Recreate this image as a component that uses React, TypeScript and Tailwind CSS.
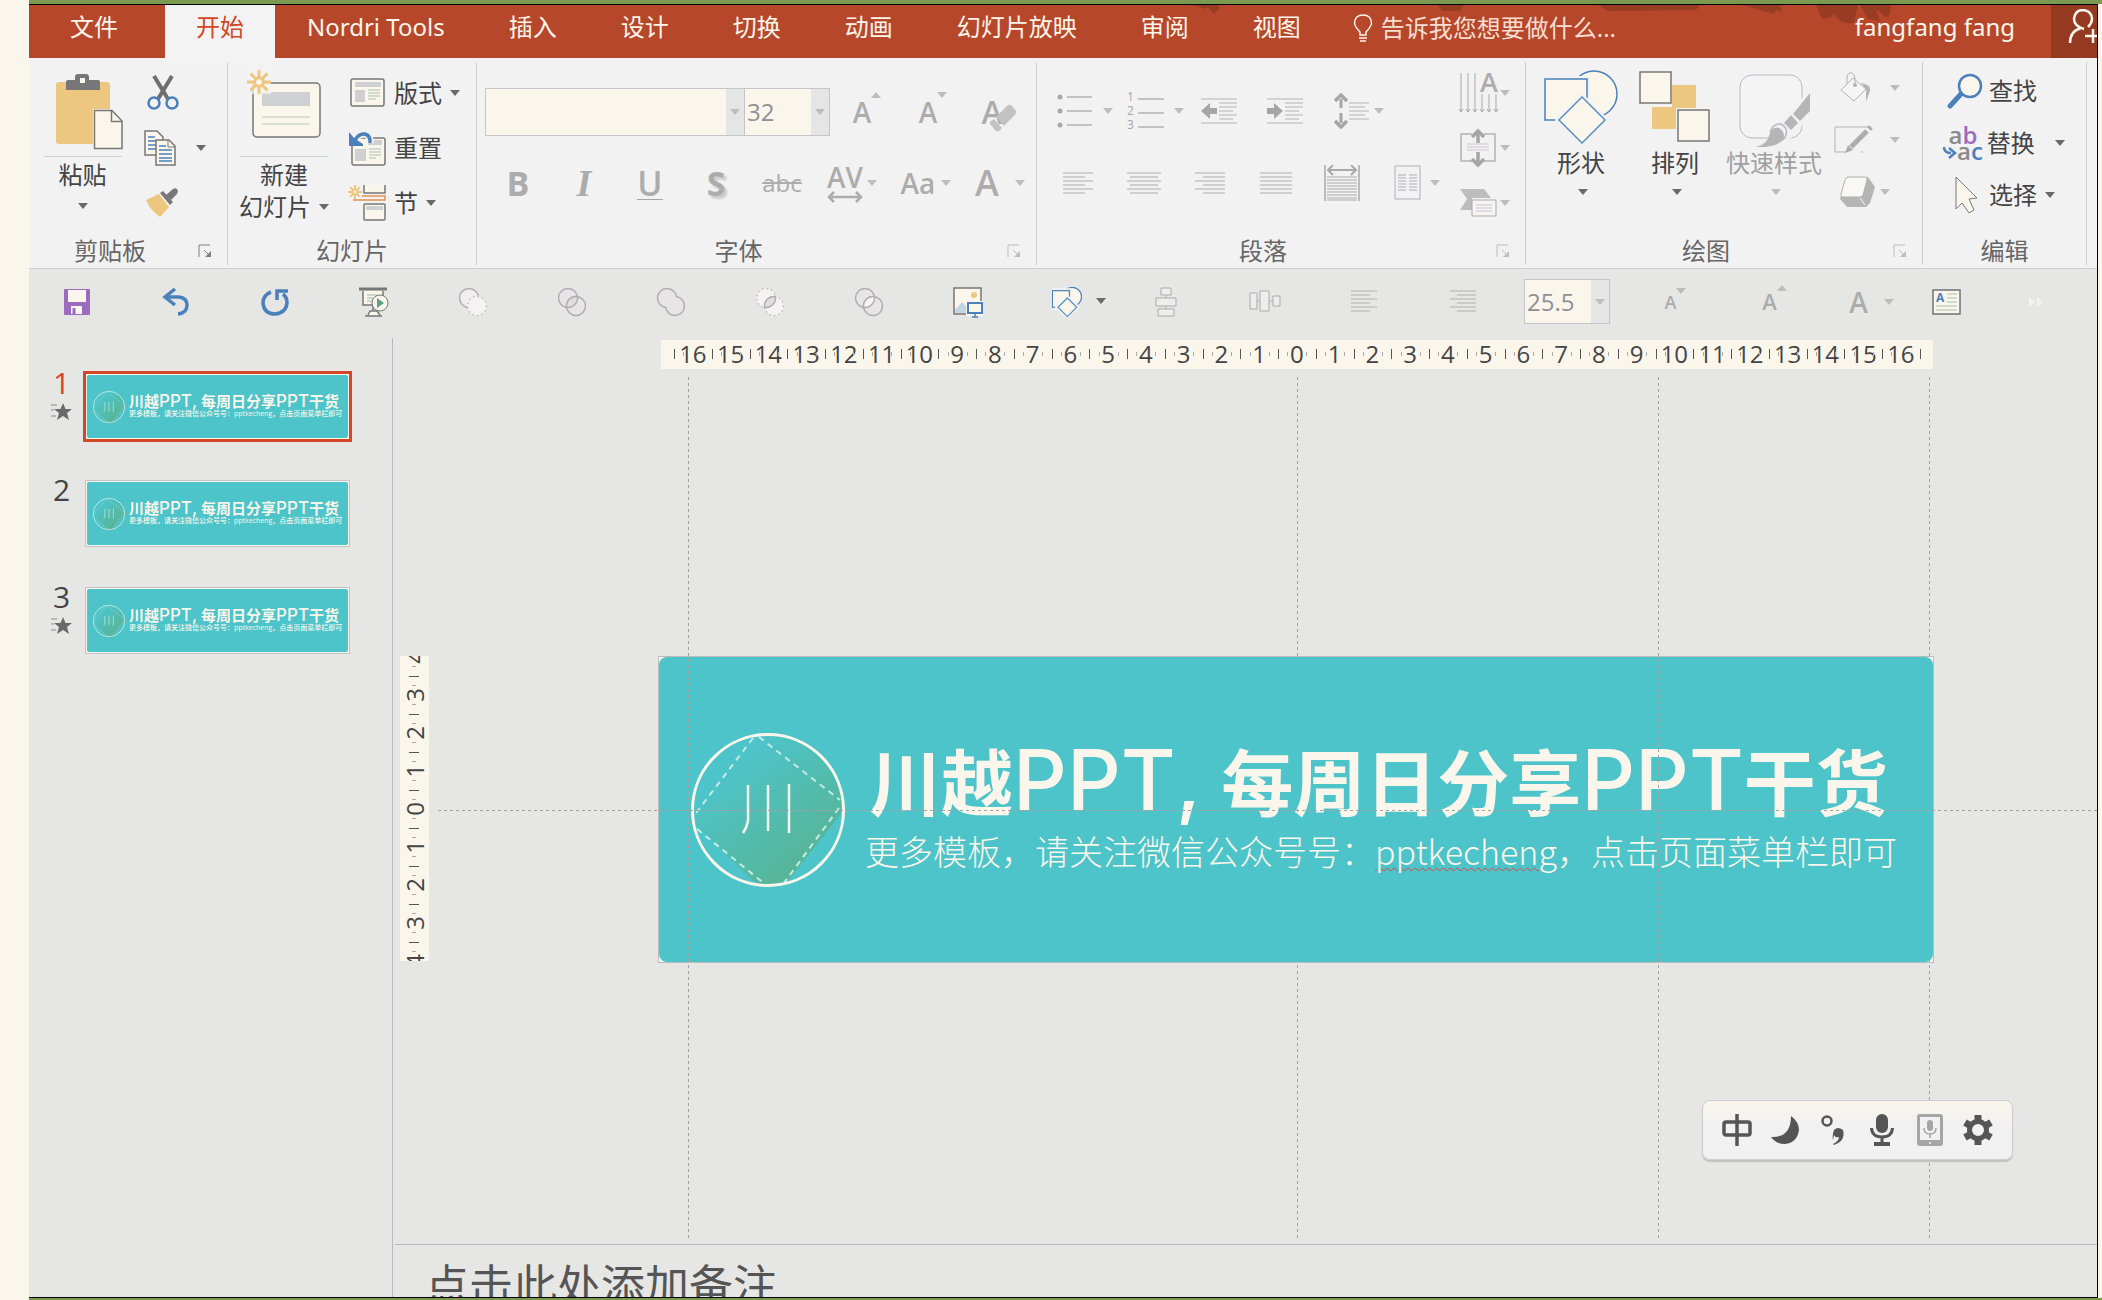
import React from 'react';

const FONT = "font-['Open_Sans','Noto_Sans_CJK_SC',sans-serif]";

interface CaretProps {
  dim?: boolean;
  up?: boolean;
}

const Caret: React.FC<CaretProps> = ({ dim, up }) => (
  <svg width="10" height="6" viewBox="0 0 10 6" className="shrink-0" aria-hidden="true">
    <path d={up ? 'M0 6L5 0L10 6Z' : 'M0 0H10L5 6Z'} fill={dim ? '#bdbdbd' : '#6a6a6a'} />
  </svg>
);

interface IconProps {
  w: number;
  h: number;
  children: React.ReactNode;
}

const Icon: React.FC<IconProps> = ({ w, h, children }) => (
  <svg width={w} height={h} viewBox={`0 0 ${w} ${h}`} fill="none" className="shrink-0" aria-hidden="true">
    {children}
  </svg>
);

interface GroupProps {
  label: string;
  width: string;
  launcher?: 'dark' | 'dim';
  children: React.ReactNode;
}

const Group: React.FC<GroupProps> = ({ label, width, launcher, children }) => (
  <section className={`shrink-0 h-[203px] mt-1 border-r border-[#cfcfcf] flex flex-col ${width}`}>
    <div className="h-[175px] flex">{children}</div>
    <div className="flex items-center h-7">
      <span className="flex-1 text-center text-2xl leading-7 text-[#666]">{label}</span>
      {launcher && (
        <button className="w-9 pr-2 flex justify-center items-center" aria-label={`${label}设置`}>
          <Icon w={14} h={14}>
            <path
              d="M1 13V1H12M6 6L12 12"
              stroke={launcher === 'dark' ? '#808080' : '#bcbcbc'}
            />
            <path d="M13 7V13H7Z" fill={launcher === 'dark' ? '#808080' : '#bcbcbc'} />
          </Icon>
        </button>
      )}
    </div>
  </section>
);

interface ComboProps {
  label: string;
  value: string;
  className: string;
}

const Combo: React.FC<ComboProps> = ({ label, value, className }) => (
  <label className={`flex border border-[#c4c5c8] bg-[#e5e5e6] ${className}`}>
    <select
      aria-label={label}
      defaultValue={value}
      className="appearance-none flex-1 min-w-0 bg-[#faf6eb] pl-0.5 text-2xl text-[#8f8f96] outline-none"
    >
      <option value={value}>{value}</option>
    </select>
    <span className="w-[18px] flex items-center justify-center">
      <Caret dim />
    </span>
  </label>
);

/* ---------- icons ---------- */

const lines = (rows: [number, number, number][]) => rows.map(([x1, x2, y]) => `M${x1} ${y}H${x2}`).join('');

const ClipboardIcon = () => (
  <Icon w={68} h={76}>
    <rect x="1" y="8" width="54" height="62" rx="3" fill="#edc67f" />
    <path d="M11 16V8Q11 6 13 6H20V3Q20 0 23 0H31Q34 0 34 3V6H43Q45 6 45 8V16Z" fill="#777" />
    <rect x="25" y="4" width="5" height="5" fill="#faf6eb" />
    <path d="M38 35H68V76H38Z" fill="#f4f3f3" />
    <path d="M39.500 36.500H57L67 47V74.500H39.500Z" fill="#faf6eb" stroke="#777" strokeWidth="1.500" />
    <path d="M56.500 37V47.500H67" stroke="#777" strokeWidth="1.500" />
  </Icon>
);

const ScissorsIcon = () => (
  <Icon w={36} h={36}>
    <path d="M10 1L24 24M28 1L14 24" stroke="#6f6f6f" strokeWidth="4" />
    <circle cx="10" cy="28" r="5.500" stroke="#4a81ba" strokeWidth="2.500" />
    <circle cx="28" cy="28" r="5.500" stroke="#4a81ba" strokeWidth="2.500" />
  </Icon>
);

const CopyIcon = () => (
  <Icon w={32} h={36}>
    <path d="M1 1H13L19 7V25H1Z" fill="#faf6eb" stroke="#777" strokeWidth="1.500" />
    <path d={lines([[4, 11, 7], [4, 16, 11], [4, 16, 15], [4, 16, 19]])} stroke="#4a81ba" strokeWidth="1.500" />
    <path d="M12 10H25L31 16V35H12Z" fill="#faf6eb" stroke="#777" strokeWidth="1.500" />
    <path d="M24 10V17H31" stroke="#777" />
    <path d={lines([[15, 22, 16], [15, 28, 20], [15, 28, 24], [15, 28, 28], [15, 28, 31]])} stroke="#4a81ba" strokeWidth="1.500" />
  </Icon>
);

const BrushIcon = () => (
  <Icon w={36} h={30}>
    <path d="M2 12L15 6L25 19L16 29Q6 22 2 12Z" fill="#edc67f" />
    <path d="M16 5L19 3L29 14L26 17Z" fill="#777" />
    <path d="M22 7L29 1Q33 -1 34 3L33 6L27 12Z" fill="#777" />
  </Icon>
);

const Burst: React.FC<{ cx: number; cy: number; r: number }> = ({ cx, cy, r }) => (
  <g stroke="#edc67f" strokeWidth={r > 10 ? 3 : 2}>
    <path
      d={`M${cx} ${cy - r}V${cy + r}M${cx - r} ${cy}H${cx + r}M${cx - r * 0.7} ${cy - r * 0.7}L${cx + r * 0.7} ${cy + r * 0.7}M${cx + r * 0.7} ${cy - r * 0.7}L${cx - r * 0.7} ${cy + r * 0.7}`}
    />
    <circle cx={cx} cy={cy} r={r * 0.36} fill="#faf6eb" />
  </g>
);

const NewSlideIcon = () => (
  <Icon w={74} h={70}>
    <rect x="6" y="13" width="67" height="54" rx="4" fill="#faf6eb" stroke="#777" strokeWidth="1.500" />
    <rect x="15" y="22" width="48" height="14" fill="#cfd0d2" />
    <path d={lines([[15, 63, 47], [15, 63, 54]])} stroke="#b8c6bf" />
    <path d="M0 0H24V24H4Z" fill="#f4f3f3" opacity="0.7" />
    <Burst cx={12} cy={12} r={12} />
  </Icon>
);

const LayoutIcon = () => (
  <Icon w={36} h={30}>
    <rect x="1" y="1" width="33" height="27" rx="2" fill="#faf6eb" stroke="#777" strokeWidth="1.500" />
    <path d="M5 4H31V9H5ZM5 12H15V24H5Z" fill="#cfd0d2" />
    <path d={lines([[18, 30, 12], [18, 30, 15], [18, 30, 18], [18, 26, 21]])} stroke="#a9bcb4" />
  </Icon>
);

const ResetIcon = () => (
  <Icon w={38} h={36}>
    <rect x="4" y="8" width="33" height="27" rx="2" fill="#faf6eb" stroke="#777" strokeWidth="1.500" />
    <path d="M20 10H34V15H20ZM7 19H18V31H7Z" fill="#cfd0d2" />
    <path d={lines([[21, 33, 19], [21, 33, 22], [21, 33, 25], [21, 28, 28]])} stroke="#a9bcb4" />
    <path d="M6 12Q10 3 17 4Q23 6 22 13" stroke="#f4f3f3" strokeWidth="7" />
    <path d="M6 12Q10 3 17 4Q23 6 22 13" stroke="#4a81ba" strokeWidth="3.500" />
    <path d="M1 2L6 8L15 14V16H1Z" fill="#4a81ba" />
  </Icon>
);

const SectionIcon = () => (
  <Icon w={38} h={38}>
    <path d="M16 1V9H37V1" fill="#faf6eb" stroke="#777" strokeWidth="1.500" />
    <path d="M5 16H37V12H14" stroke="#e0914f" strokeWidth="1.500" />
    <rect x="16" y="20" width="21" height="16" rx="1" fill="#faf6eb" stroke="#777" strokeWidth="1.500" />
    <rect x="18" y="22" width="17" height="4" fill="#cfd0d2" />
    <Burst cx={7} cy={8} r={7} />
  </Icon>
);

const EraserIcon = () => (
  <Icon w={28} h={28}>
    <path d="M7 13L19 1Q21 0 23 2L27 7Q28 9 26 11L15 22Z" fill="#c2c2c2" />
    <path d="M5 15L13 24L10 27Q8 28 6 26L1 20Q0 18 2 17Z" fill="#c2c2c2" />
  </Icon>
);

const BulletsIcon = () => (
  <Icon w={36} h={34}>
    <path d="M3 3h.01M3 17h.01M3 31h.01" stroke="#a9a9a9" strokeWidth="5" strokeLinecap="round" />
    <path d={lines([[10, 35, 3], [10, 35, 17], [10, 35, 31]])} stroke="#b3b3b3" strokeWidth="1.500" />
  </Icon>
);

const NumberingIcon = () => (
  <span className="flex gap-1 items-center">
    <span className="flex flex-col text-xs leading-[14px] text-[#a5a5a5]">
      <span>1</span>
      <span>2</span>
      <span>3</span>
    </span>
    <Icon w={26} h={34}>
      <path d={lines([[0, 26, 5], [0, 26, 19], [0, 26, 33]])} stroke="#b3b3b3" strokeWidth="1.500" />
    </Icon>
  </span>
);

const IndentIcon: React.FC<{ out?: boolean }> = ({ out }) => (
  <Icon w={36} h={28}>
    <path
      d={lines([[0, 36, 2], [18, 36, 6], [18, 36, 10], [18, 32, 14], [18, 36, 18], [18, 32, 22], [0, 36, 26]])}
      stroke="#b3b3b3"
    />
    <path d={out ? 'M0 14L9 6V11H16V17H9V22Z' : 'M16 14L7 6V11H0V17H7V22Z'} fill="#a5a5a5" />
  </Icon>
);

const SpacingIcon = () => (
  <Icon w={36} h={36}>
    <path d="M7 6V15M7 20V30" stroke="#a5a5a5" strokeWidth="3" />
    <path d="M1 8L7 2L13 8M1 28L7 34L13 28" stroke="#a5a5a5" strokeWidth="3.500" />
    <path d={lines([[15, 35, 10], [15, 31, 14], [15, 35, 18], [15, 31, 22], [15, 35, 26]])} stroke="#b3b3b3" />
  </Icon>
);

const alignRows = {
  left: lines([[0, 30, 1], [0, 22, 5], [0, 30, 9], [0, 22, 13], [0, 30, 17], [0, 22, 21]]),
  center: lines([[0, 34, 1], [3, 31, 5], [0, 34, 9], [3, 31, 13], [0, 34, 17], [3, 31, 21]]),
  right: lines([[0, 30, 1], [8, 30, 5], [0, 30, 9], [8, 30, 13], [0, 30, 17], [8, 30, 21]]),
  justify: lines([[0, 32, 1], [0, 32, 5], [0, 32, 9], [0, 32, 13], [0, 32, 17], [0, 32, 21]]),
};

const AlignIcon: React.FC<{ kind: keyof typeof alignRows; w?: number }> = ({ kind, w = 34 }) => (
  <svg width={w} height="23" viewBox={`0 0 ${w === 26 ? 30 : w} 23`} fill="none" preserveAspectRatio="none" aria-hidden="true">
    <path d={alignRows[kind]} stroke="#acacac" />
  </svg>
);

const DistributeIcon = () => (
  <Icon w={36} h={36}>
    <path d="M1 0V36M35 0V36" stroke="#a9a9a9" strokeWidth="1.500" />
    <path d="M4 5H32M9 0L4 5L9 10M27 0L32 5L27 10" stroke="#a9a9a9" strokeWidth="2" />
    <path
      d={lines([[3, 33, 12], [3, 33, 15], [3, 33, 18], [3, 33, 21], [3, 33, 24], [3, 33, 27], [3, 33, 30], [3, 33, 33], [3, 33, 35]])}
      stroke="#a9a9a9"
    />
  </Icon>
);

const ColumnsIcon = () => (
  <Icon w={28} h={36}>
    <rect x="1" y="1" width="25" height="33" stroke="#b0adb3" />
    <path
      d={lines([[4, 12, 10], [4, 12, 13], [4, 12, 16], [4, 12, 19], [4, 12, 22], [4, 12, 25], [15, 23, 10], [15, 23, 13], [15, 23, 16], [15, 23, 19], [15, 23, 22], [15, 23, 25]])}
      stroke="#b0adb3"
    />
  </Icon>
);

const TextDirectionIcon = () => (
  <Icon w={42} h={42}>
    <path d="M3 1V40M10 1V40M17 1V40M24 22V40M31 22V40M38 22V40" stroke="#a9a9a9" />
    <path
      d="M1 37L3 40L5 37M8 37L10 40L12 37M15 37L17 40L19 37M22 37L24 40L26 37M29 37L31 40L33 37M36 37L38 40L40 37"
      stroke="#a9a9a9"
    />
    <text x="22" y="20" fontSize="27" fontWeight="600" fill="#acacac">A</text>
  </Icon>
);

const AlignTextIcon = () => (
  <Icon w={42} h={40}>
    <path d="M14 6H3V33H14M26 6H37V33H26" stroke="#b3b3b3" strokeWidth="1.500" />
    <path d="M20 15V4M14 9L20 3L26 9M20 24V36M14 31L20 37L26 31" stroke="#a5a5a5" strokeWidth="3.500" />
    <path d={lines([[9, 31, 16], [9, 31, 19], [9, 31, 22]])} stroke="#cbc3d4" />
  </Icon>
);

const SmartArtIcon = () => (
  <Icon w={42} h={32}>
    <path d="M2 2H26L33 11H14V23H2L9 12Z" fill="#bdbdbd" />
    <rect x="14" y="13" width="24" height="16" fill="#f7f5f4" stroke="#aaa" />
    <path d={lines([[18, 34, 18], [18, 34, 21], [18, 34, 24]])} stroke="#cbc3d4" />
  </Icon>
);

const ShapesIcon: React.FC<{ w: number; h: number; line: number }> = ({ w, h, line }) => (
  <svg width={w} height={h} viewBox="0 0 74 74" fill="none" aria-hidden="true">
    <circle cx="50" cy="24" r="23" fill="#faf6eb" stroke="#4a81ba" strokeWidth={line} />
    <rect x="1" y="9" width="42" height="41" fill="#faf6eb" stroke="#f2f2f2" strokeWidth={line * 4} />
    <rect x="1" y="9" width="42" height="41" fill="#faf6eb" stroke="#4a81ba" strokeWidth={line} />
    <path d="M38 27L61 50L38 73L15 50Z" fill="#faf6eb" stroke="#f2f2f2" strokeWidth={line * 4} />
    <path d="M38 27L61 50L38 73L15 50Z" fill="#faf6eb" stroke="#5b91c6" strokeWidth={line} />
  </svg>
);

const ArrangeIcon = () => (
  <Icon w={72} h={74}>
    <path d="M33 15H57V39H37V59H13V37H33Z" fill="#edc67f" />
    <rect x="1" y="2" width="31" height="31" fill="#faf6eb" stroke="#777" strokeWidth="1.500" />
    <path d="M37 38H72V74H37Z" fill="#f2f2f2" />
    <rect x="39" y="40" width="31" height="31" fill="#faf6eb" stroke="#777" strokeWidth="1.500" />
  </Icon>
);

const QuickStyleIcon = () => (
  <Icon w={74} h={78}>
    <rect x="3" y="5" width="62" height="63" rx="12" stroke="#b9b6bd" fill="#f4f4f4" />
    <path d="M73 20V46L54 68L38 76L32 62Z" fill="#f3f2f3" />
    <path d="M73 23V41L63 51L56 44Z" fill="#b5b5b5" />
    <path d="M54 45L61 53L54 60L47 53Z" fill="#b5b5b5" />
    <path d="M32 66Q34 56 42 58Q49 62 46 70Q38 78 19 77Q30 74 32 66Z" fill="#b5b5b5" />
    <path d="M33 62Q36 53 44 54Q54 60 46 70" stroke="#b9b6bd" strokeWidth="1.500" />
  </Icon>
);

const FillIcon = () => (
  <Icon w={40} h={34}>
    <path d="M19 7L32 18L20 30L7 19Z" fill="#f7f5f4" stroke="#b3b3b3" />
    <path d="M13 13V6Q14 1 18 2Q21 3 21 8V14" stroke="#b3b3b3" />
    <circle cx="21" cy="14" r="2" fill="#b3b3b3" />
    <path d="M27 12Q38 14 36 20L32 31L32 18Z" fill="#b5b5b5" />
  </Icon>
);

const OutlineIcon = () => (
  <Icon w={40} h={30}>
    <path d="M36 2H1V27H12M27 27H29" stroke="#b3b3b3" />
    <path d="M17 22L33 6" stroke="#acacac" strokeWidth="5" />
    <path d="M35 4L37 2" stroke="#acacac" strokeWidth="5" />
    <path d="M11 28L14 20L19 25Z" fill="#acacac" />
  </Icon>
);

const EffectsIcon = () => (
  <Icon w={42} h={34}>
    <path d="M13 2H34L41 12L36 28L32 32H13L6 24Z" fill="#b5b5b5" />
    <path d="M14 2H31Q34 2 33 5L29 20Q28 22 26 22H9Q6 22 7 19L11 5Q12 2 14 2Z" fill="#faf8f5" stroke="#b0b0b0" />
    <path d="M26 23L31 30" stroke="#faf8f5" />
  </Icon>
);

const FindIcon = () => (
  <Icon w={42} h={38}>
    <path d="M7 34L18 22" stroke="#4a81ba" strokeWidth="5" strokeLinecap="round" />
    <circle cx="27" cy="14" r="11" fill="#faf6eb" stroke="#4a81ba" strokeWidth="2.500" />
  </Icon>
);

const ReplaceIcon = () => (
  <span className="flex flex-col text-2xl leading-4 font-semibold text-[#8a8a8a]" aria-hidden="true">
    <span>
      a<span className="text-[#9b6bbd]">b</span>
    </span>
    <span className="flex items-end">
      <Icon w={14} h={12}>
        <path d="M1 0Q1 6 8 6M6 1L12 6L6 11" stroke="#4a81ba" strokeWidth="2.500" />
      </Icon>
      <span>
        a<span className="text-[#4a81ba]">c</span>
      </span>
    </span>
  </span>
);

const CursorIcon = () => (
  <Icon w={42} h={38}>
    <path d="M13 1V33L19 27L26 37L31 34L26 23L34 22Z" fill="#faf6eb" stroke="#777" />
  </Icon>
);

const SaveIcon = () => (
  <Icon w={26} h={26}>
    <rect width="26" height="26" rx="1" fill="#9b6bbd" />
    <path d="M4 1H22V13H4ZM7 17H18V25H7Z" fill="#faf6eb" />
    <path d="M8.500 19H11.500V25H8.500Z" fill="#9b6bbd" />
  </Icon>
);

const UndoIcon = () => (
  <Icon w={28} h={28}>
    <path d="M4 9H17Q25 10 25 17Q25 25 16 26" stroke="#4a81ba" strokeWidth="3.500" />
    <path d="M13 1L3 9L13 17" stroke="#4a81ba" strokeWidth="3.500" />
  </Icon>
);

const RedoIcon = () => (
  <Icon w={28} h={28}>
    <path d="M10 4Q2 7 2 15Q3 26 14 26Q25 25 26 15Q26 9 22 6" stroke="#4a81ba" strokeWidth="3.500" />
    <path d="M16 12V3H27" stroke="#4a81ba" strokeWidth="3.500" />
  </Icon>
);

const ShowIcon = () => (
  <Icon w={30} h={30}>
    <path d="M0 2H28" stroke="#777" strokeWidth="3" />
    <path d="M4 4V18H24V4M14 18V24M9 28L11 24H18L21 28M6 29H23" fill="#faf6eb" stroke="#777" strokeWidth="1.500" />
    <path d={lines([[8, 18, 8], [8, 14, 11], [8, 14, 14]])} stroke="#9db5ac" />
    <circle cx="21" cy="16" r="8" fill="#faf6eb" stroke="#777" />
    <path d="M18 11L25 16L18 21Z" fill="#5fa088" />
  </Icon>
);

interface MergeProps {
  kind: 'subtract' | 'fragment' | 'union' | 'intersect' | 'combine';
}

const MergeIcon: React.FC<MergeProps> = ({ kind }) => {
  const dottedA = kind === 'intersect';
  const dottedB = kind === 'subtract' || kind === 'intersect';
  if (kind === 'union') {
    return (
      <Icon w={30} h={30}>
        <path
          d="M20.400 9.600A9.500 9.500 0 1 0 9.600 20.400A9.500 9.500 0 1 0 20.400 9.600Z"
          fill="#e9e4e6"
          stroke="#b0adb2"
          strokeWidth="1.500"
        />
      </Icon>
    );
  }
  return (
    <Icon w={30} h={30}>
      <circle
        cx="11"
        cy="11"
        r="9.500"
        fill={dottedA ? '#f5f3f2' : kind === 'subtract' ? '#f0eeee' : '#e9e4e6'}
        stroke={dottedA ? '#c9b3c4' : '#b0adb2'}
        strokeWidth="1.500"
        strokeDasharray={dottedA ? '1.500 3' : undefined}
      />
      <circle
        cx="19"
        cy="19"
        r="9.500"
        fill={dottedB ? '#f5f3f2' : '#e9e4e6'}
        stroke={dottedB ? '#c9b3c4' : '#b0adb2'}
        strokeWidth="1.500"
        strokeDasharray={dottedB ? '1.500 3' : undefined}
      />
      {kind !== 'subtract' && (
        <path
          d="M9.600 20.400A9.500 9.500 0 0 1 20.400 9.600A9.500 9.500 0 0 1 9.600 20.400Z"
          fill={kind === 'combine' ? '#f5f3f2' : '#e2dde0'}
          stroke="#b0adb2"
          strokeWidth="1.500"
        />
      )}
    </Icon>
  );
};

const PictureIcon = () => (
  <Icon w={30} h={32}>
    <rect x="1" y="2" width="27" height="26" fill="#faf6eb" stroke="#777" strokeWidth="1.500" />
    <circle cx="21" cy="9" r="3" fill="#edc67f" />
    <path d="M2 27V24L9 16L14 21V27Z" fill="#c3d4e6" />
    <path d="M13 15H30V30H13Z" fill="#faf6eb" />
    <rect x="15" y="17" width="14" height="10" fill="#faf6eb" stroke="#4a81ba" strokeWidth="2" />
    <path d="M22 28V31M19 31H25" stroke="#4a81ba" strokeWidth="1.500" />
  </Icon>
);

const AlignMiddleIcon = () => (
  <Icon w={22} h={30}>
    <path d="M11 8V11M11 19V22" stroke="#b3b3b3" />
    <path d="M6 1H16V8H6ZM1 11H21V19H1ZM3 22H19V29H3Z" fill="#efeeee" stroke="#aaa" />
  </Icon>
);

const DistributeHIcon = () => (
  <Icon w={32} h={24}>
    <path d="M8 11H11M20 11H24" stroke="#b3b3b3" />
    <path d="M1 3H8V19H1ZM11 1H20V21H11ZM24 6H31V16H24Z" fill="#efeeee" stroke="#aaa" />
  </Icon>
);

const TextBoxIcon = () => (
  <Icon w={30} h={26}>
    <rect x="1" y="1" width="27" height="24" fill="#faf6eb" stroke="#6f7377" strokeWidth="1.500" />
    <text x="4" y="13" fontSize="12" fontWeight="700" fill="#4a81ba">A</text>
    <path d={lines([[15, 25, 5], [15, 25, 9], [15, 25, 13], [4, 25, 17], [4, 25, 21]])} stroke="#a9bcb4" />
  </Icon>
);

const StarIcon = () => (
  <Icon w={22} h={18}>
    <path d="M0 2H6M0 7H3M0 13H5" stroke="#888" />
    <path d="M12 0L14.500 6H21L16 10L18 17L12 13L6 17L8 10L3 6H9.500Z" fill="#6a6a6a" />
  </Icon>
);

/* ---------- slide contents ---------- */

const Emblem: React.FC<{ className: string }> = ({ className }) => (
  <svg viewBox="0 0 154 154" fill="none" className={`shrink-0 ${className}`} aria-hidden="true">
    <defs>
      <linearGradient id="emblem" x1="0.2" y1="0.1" x2="0.85" y2="0.9">
        <stop offset="0.1" stopColor="#4dc4c9" />
        <stop offset="1" stopColor="#58b391" />
      </linearGradient>
    </defs>
    <path d="M65 3Q110 -4 140 36L152 70L149 82L95 150Q70 156 60 146L5 92L4 78Z" fill="url(#emblem)" />
    <path d="M62 5L5 80M68 4L149 67M6 96L75 152M148 75L93 150" stroke="#c5ebe8" strokeWidth="2" strokeDasharray="6 5" />
    <circle cx="77" cy="77" r="75.500" stroke="#faf6eb" strokeWidth="3" />
    <path d="M57 52V88Q56 94 52 100M77 52V98M98 51V100" stroke="#f3f7f0" strokeWidth="2.500" />
  </svg>
);

const Thumbnail: React.FC<{ index: number; active?: boolean; animated?: boolean }> = ({ index, active, animated }) => (
  <li className="flex h-[107px]">
    <div className="w-[33px] mr-[5px] flex flex-col items-center gap-2">
      <span className={`text-3xl leading-6 ${active ? 'text-[#d24726]' : 'text-[#444]'}`}>{index}</span>
      {animated && <StarIcon />}
    </div>
    <button
      aria-label={`幻灯片 ${index}`}
      className={`p-px bg-[#faf6eb] ${active ? 'w-[269px] h-[71px] border-3 border-[#d24726]' : 'm-0.5 w-[265px] h-[67px] border border-[#c3c3c6]'}`}
    >
      <span className="h-full flex items-center rounded-xs bg-[#4dc4c9] pl-1.5 gap-1 whitespace-nowrap">
        <Emblem className="w-8 h-8" />
        <span className="flex flex-col items-start pb-1 text-[#faf6eb]">
          <span className="text-[15px] leading-[18px] font-bold flex items-baseline">
            川越<span className="font-[Inter] font-medium text-[17px]">PPT</span>
            <span className="font-[Inter] font-medium text-[17px]">,</span>
            <span className="ml-1">每周日分享</span>
            <span className="font-[Inter] font-medium text-[17px]">PPT</span>干货
          </span>
          <span className="text-[7px] leading-2 font-medium">更多模板，请关注微信公众号号：pptkecheng，点击页面菜单栏即可</span>
        </span>
      </span>
    </button>
  </li>
);

const hTicks = Array.from({ length: 33 }, (_, i) => Math.abs(i - 16));
const vTicks = Array.from({ length: 9 }, (_, i) => Math.abs(i - 4));

const HorizontalRuler = () => (
  <div className="w-[1272px] h-[29px] bg-[#faf6eb] px-[13px] flex text-2xl leading-7 text-[#444]">
    {hTicks.map((n, i) => (
      <span key={i} className="relative flex-1 w-0 flex justify-center">
        <i className="absolute left-0 top-[9px] w-px h-[10px] bg-[#555]" />
        <i className="absolute left-1/4 top-3 w-px h-1 bg-[#aaa]" />
        <i className="absolute left-3/4 top-3 w-px h-1 bg-[#aaa]" />
        {n}
        {i === 32 && <i className="absolute left-full top-[9px] w-px h-[10px] bg-[#555]" />}
      </span>
    ))}
  </div>
);

const VerticalRuler = () => (
  <div className="w-[29px] h-[305px] bg-[#faf6eb] overflow-hidden flex flex-col justify-center text-2xl leading-7 text-[#444]">
    {vTicks.map((n, i) => (
      <span key={i} className="relative shrink-0 h-[38px] flex items-center justify-center">
        <i className="absolute top-0 left-[9px] h-px w-[10px] bg-[#555]" />
        <i className="absolute top-1/4 left-3 h-px w-1 bg-[#aaa]" />
        <i className="absolute top-3/4 left-3 h-px w-1 bg-[#aaa]" />
        <span className="-rotate-90">{n}</span>
      </span>
    ))}
  </div>
);

const Guide: React.FC<{ className: string }> = ({ className }) => (
  <div
    className={`absolute top-[43px] bottom-1 w-px bg-[repeating-linear-gradient(180deg,#a3a3a3_0_3px,transparent_3px_6px)] ${className}`}
  />
);

/* ---------- ribbon ---------- */

const tabs = ['Nordri Tools', '插入', '设计', '切换', '动画', '幻灯片放映', '审阅', '视图'];

const TitleTabs = () => (
  <header className="relative h-[53px] shrink-0 flex bg-[#b7472a] font-['Noto_Sans','Noto_Sans_CJK_SC',sans-serif] text-2xl leading-8 text-[#faf6eb] whitespace-nowrap overflow-hidden">
    <svg width="720" height="22" viewBox="0 0 720 22" className="absolute top-0 right-[187px]" aria-hidden="true">
      <g fill="#993c24">
        <path d="M0 0H28L30 3L24 9L18 2L14 4L8 1ZM248 0H274L270 6H252ZM408 0H510L506 5L418 6ZM553 0H590L592 7L586 5L584 9L566 4ZM626 0H648L642 12L632 14ZM645 0H668L664 18Q650 20 643 8ZM670 0H684L690 16L678 14ZM680 0H700Q702 10 696 12Z" />
      </g>
    </svg>
    <nav className="relative flex">
      <button className="w-[136px] pb-2.5 pr-1.5">文件</button>
      <button className="w-[110px] pb-2.5 bg-[#f4f3f3] text-[#d24726]">开始</button>
      {tabs.map((tab) => (
        <button key={tab} className="px-8 pb-2.5">
          {tab}
        </button>
      ))}
    </nav>
    <label className="relative flex flex-1 items-center gap-2 pl-5 pb-2">
      <Icon w={20} h={28}>
        <path
          d="M7 21V18Q2 13 1.500 9Q2 1 10 1Q18 1 18.500 9Q18 13 13 18V21ZM6 24H14M7 27H13"
          stroke="#faf6eb"
          strokeWidth="1.500"
        />
      </Icon>
      <input
        type="text"
        aria-label="告诉我您想要做什么"
        placeholder="告诉我您想要做什么..."
        className="w-72 bg-transparent placeholder:text-[#f6dfd2] outline-none"
      />
    </label>
    <button className="relative pb-2.5 pr-9">fangfang fang</button>
    <button className="relative w-[46px] bg-[#963921] flex justify-end pt-1" aria-label="共享">
      <Icon w={29} h={36}>
        <path d="M16 20Q6 17 6 10Q7 1 15 1Q24 2 24 10Q24 14 20 18M2 34Q2 22 13 19M25 20V34M17 27H29" stroke="#faf6eb" strokeWidth="2.500" />
      </Icon>
    </button>
  </header>
);

const BigButton: React.FC<{ label: string; width: string; dim?: boolean; children: React.ReactNode }> = ({
  label,
  width,
  dim,
  children,
}) => (
  <button className={`flex flex-col items-center pt-2 whitespace-nowrap ${width} ${dim ? 'text-[#a0a0a0]' : 'text-[#444]'}`}>
    <span className="h-[75px] flex items-start">{children}</span>
    <span className="h-11 text-2xl leading-9">{label}</span>
    <span className="pl-1 flex">
      <Caret dim={dim} />
    </span>
  </button>
);

const Ribbon = () => (
  <div className="h-[211px] shrink-0 flex bg-[#f3f2f3] border-b border-[#d0d0d0] text-2xl text-[#444] whitespace-nowrap">
    <Group label="剪贴板" width="w-[199px]" launcher="dark">
      <button className="w-[93px] pl-3.5 flex flex-col items-center pt-3">
        <span className="h-[82px] w-full flex justify-center pl-3">
          <ClipboardIcon />
        </span>
        <span className="w-[78px] h-px bg-[#c8d3cb]" />
        <span className="h-[46px] leading-9">粘贴</span>
        <Caret />
      </button>
      <div className="grid grid-rows-[55px_55px_55px] pl-[22px] pt-[3px]">
        <button aria-label="剪切" className="flex items-center">
          <ScissorsIcon />
        </button>
        <button aria-label="复制" className="flex items-center gap-5">
          <CopyIcon />
          <Caret />
        </button>
        <button aria-label="格式刷" className="flex items-center">
          <BrushIcon />
        </button>
      </div>
    </Group>

    <Group label="幻灯片" width="w-[249px]">
      <button className="w-[108px] pl-1 flex flex-col items-center pt-2">
        <span className="h-[86px]">
          <NewSlideIcon />
        </span>
        <span className="w-[88px] h-px bg-[#c8d3cb]" />
        <span className="leading-9">新建</span>
        <span className="flex items-center gap-2 leading-7">
          幻灯片
          <Caret />
        </span>
      </button>
      <div className="grid grid-rows-[55px_55px_55px] pl-3 pt-[3px]">
        <button className="flex items-center gap-2">
          <span className="w-[38px] flex justify-end">
            <LayoutIcon />
          </span>
          <span>版式</span>
          <Caret />
        </button>
        <button className="flex items-center gap-2">
          <ResetIcon />
          <span>重置</span>
        </button>
        <button className="flex items-center gap-2">
          <SectionIcon />
          <span>节</span>
          <Caret />
        </button>
      </div>
    </Group>

    <Group label="字体" width="w-[560px]" launcher="dim">
      <div className="pl-2 pt-[14px] font-semibold text-[#acacac]">
        <div className="h-[72px] flex items-center">
          <Combo label="字体名称" value="" className="w-[260px] h-12 font-normal" />
          <Combo label="字号" value="32" className="w-[85px] h-12 font-normal border-l-0" />
          <div className="grid grid-cols-[66px_66px_66px] pl-1">
            <button aria-label="增大字号" className="flex justify-center text-[28px] leading-10">
              A<Caret dim up />
            </button>
            <button aria-label="减小字号" className="flex justify-center text-[28px] leading-10">
              A<Caret dim />
            </button>
            <button aria-label="清除格式" className="flex justify-center items-center text-[32px] leading-9">
              A
              <span className="-ml-3.5 pt-3">
                <EraserIcon />
              </span>
            </button>
          </div>
        </div>
        <div className="h-[70px] grid grid-cols-[repeat(5,66px)_repeat(3,74px)] items-center text-[34px] leading-10">
          <button className="font-bold">B</button>
          <button className="font-bold italic font-['Liberation_Serif',serif] text-[38px]">I</button>
          <button className="flex justify-center">
            <span className="border-b border-[#a5a5a5] leading-8">U</span>
          </button>
          <button className="font-bold [text-shadow:3px_3px_2px_#ccc]">S</button>
          <button className="font-normal text-2xl line-through">abc</button>
          <button className="flex items-center justify-center gap-1 text-[28px]">
            <span className="flex flex-col items-center leading-7">
              AV
              <Icon w={36} h={12}>
                <path d="M2 6H34M7 1L2 6L7 11M29 1L34 6L29 11" stroke="#acacac" strokeWidth="2.500" />
              </Icon>
            </span>
            <Caret dim />
          </button>
          <button className="flex items-center justify-center gap-1.5 text-[28px]">
            Aa
            <Caret dim />
          </button>
          <button className="flex items-center justify-center gap-4 text-[36px]">
            A
            <Caret dim />
          </button>
        </div>
      </div>
    </Group>

    <Group label="段落" width="w-[489px]" launcher="dim">
      <div className="w-[421px] pt-[13px]">
        <div className="h-[72px] pl-5 grid grid-cols-[70px_74px_66px_67px_60px] items-center">
          <button aria-label="项目符号" className="flex items-center gap-2.5">
            <BulletsIcon />
            <Caret dim />
          </button>
          <button aria-label="编号" className="flex items-center gap-2.5">
            <NumberingIcon />
            <Caret dim />
          </button>
          <button aria-label="减少缩进">
            <IndentIcon out />
          </button>
          <button aria-label="增加缩进">
            <IndentIcon />
          </button>
          <button aria-label="行距" className="flex items-center gap-1">
            <SpacingIcon />
            <Caret dim />
          </button>
        </div>
        <div className="h-[72px] pl-2 grid grid-cols-[repeat(5,66px)_84px] items-center justify-items-center">
          <button aria-label="左对齐">
            <AlignIcon kind="left" w={30} />
          </button>
          <button aria-label="居中">
            <AlignIcon kind="center" />
          </button>
          <button aria-label="右对齐">
            <AlignIcon kind="right" w={30} />
          </button>
          <button aria-label="两端对齐">
            <AlignIcon kind="justify" w={32} />
          </button>
          <button aria-label="分散对齐">
            <DistributeIcon />
          </button>
          <button aria-label="分栏" className="flex items-center gap-2">
            <ColumnsIcon />
            <Caret dim />
          </button>
        </div>
      </div>
      <div className="grid grid-rows-[55px_55px_55px] pt-[3px]">
        <button aria-label="文字方向" className="flex items-center">
          <TextDirectionIcon />
          <Caret dim />
        </button>
        <button aria-label="对齐文本" className="flex items-center">
          <AlignTextIcon />
          <Caret dim />
        </button>
        <button aria-label="转换为 SmartArt" className="flex items-center">
          <SmartArtIcon />
          <Caret dim />
        </button>
      </div>
    </Group>

    <Group label="绘图" width="w-[397px]" launcher="dim">
      <div className="flex pl-2">
        <BigButton label="形状" width="w-[94px]">
          <ShapesIcon w={74} h={74} line={1.5} />
        </BigButton>
        <BigButton label="排列" width="w-[94px]">
          <ArrangeIcon />
        </BigButton>
        <BigButton label="快速样式" width="w-[104px]" dim>
          <QuickStyleIcon />
        </BigButton>
      </div>
      <div className="grid grid-rows-[52px_52px_52px] pl-2">
        <button aria-label="形状填充" className="flex items-center gap-4">
          <FillIcon />
          <Caret dim />
        </button>
        <button aria-label="形状轮廓" className="flex items-center gap-4">
          <OutlineIcon />
          <Caret dim />
        </button>
        <button aria-label="形状效果" className="flex items-center gap-1">
          <EffectsIcon />
          <Caret dim />
        </button>
      </div>
    </Group>

    <Group label="编辑" width="w-[164px]">
      <div className="grid grid-rows-[52px_52px_52px] pl-5 pt-[3px]">
        <button className="flex items-center gap-1">
          <FindIcon />
          查找
        </button>
        <button className="flex items-center gap-1">
          <ReplaceIcon />
          替换
          <span className="pl-4">
            <Caret />
          </span>
        </button>
        <button className="flex items-center gap-1">
          <CursorIcon />
          选择
          <span className="pl-1">
            <Caret />
          </span>
        </button>
      </div>
    </Group>
  </div>
);

const quickTools: [string, React.ReactNode][] = [
  ['保存', <SaveIcon />],
  ['撤消', <UndoIcon />],
  ['重复', <RedoIcon />],
  ['从头开始', <ShowIcon />],
  ['剪除', <MergeIcon kind="subtract" />],
  ['拆分', <MergeIcon kind="fragment" />],
  ['联合', <MergeIcon kind="union" />],
  ['相交', <MergeIcon kind="intersect" />],
  ['组合', <MergeIcon kind="combine" />],
  ['图片', <PictureIcon />],
  ['形状', <ShapesIcon w={30} h={30} line={3} />],
  ['垂直居中', <AlignMiddleIcon />],
  ['横向分布', <DistributeHIcon />],
  ['左对齐', <AlignIcon kind="left" w={26} />],
  ['右对齐', <AlignIcon kind="right" w={26} />],
];

const QuickAccess = () => (
  <div className="-ml-0.5 h-[65px] shrink-0 flex items-center font-semibold text-[#acacac]">
    {quickTools.map(([label, icon], i) => (
      <button key={i} aria-label={label} className="relative w-[99px] h-10 shrink-0 flex items-center justify-center">
        {icon}
        {label === '形状' && (
          <span className="absolute right-2.5 top-4 flex">
            <Caret />
          </span>
        )}
      </button>
    ))}
    <Combo label="字号" value="25.5" className="ml-3 w-[86px] h-[45px] font-normal" />
    <button aria-label="减小字号" className="ml-4 w-[99px] flex justify-center text-lg">
      A<Caret dim />
    </button>
    <button aria-label="增大字号" className="w-[99px] flex justify-center text-[22px]">
      A<Caret dim up />
    </button>
    <button aria-label="字体颜色" className="w-[95px] flex items-center justify-center gap-4 text-[28px]">
      A<Caret dim />
    </button>
    <button aria-label="文本框" className="w-14 flex justify-center">
      <TextBoxIcon />
    </button>
    <button aria-label="更多" className="flex-1 flex justify-center">
      <Icon w={14} h={10}>
        <path d="M0 0L6 5L0 10ZM8 0L14 5L8 10Z" fill="#f6f3ea" />
      </Icon>
    </button>
  </div>
);

const InputMethodBar = () => (
  <div className="absolute right-[84px] bottom-[84px] w-[311px] h-[60px] px-[10px] flex rounded-lg border border-[#cfccd3] bg-linear-to-b from-[#faf6eb] to-[#f2f1f2] to-40% shadow-[0_2px_1px_#c0c1bf]">
    <button aria-label="中文" className="flex-1 flex items-center justify-center">
      <Icon w={30} h={32}>
        <rect x="2" y="8" width="26" height="13" rx="2" stroke="#555" strokeWidth="3.500" />
        <path d="M15 0V32" stroke="#555" strokeWidth="3.500" />
      </Icon>
    </button>
    <button aria-label="半角" className="flex-1 flex items-center justify-center">
      <Icon w={28} h={28}>
        <path d="M20 0Q28 6 28 14Q26 27 14 28Q5 28 0 21Q20 22 20 0Z" fill="#555" />
      </Icon>
    </button>
    <button aria-label="中文标点" className="flex-1 flex items-center justify-center">
      <Icon w={24} h={30}>
        <circle cx="6" cy="6" r="4.500" stroke="#555" strokeWidth="2.500" />
        <path d="M12 25Q11 20 13 15Q17 11 22 15Q25 26 13 30L12 29Q18 26 18 22Q14 23 13 20Z" fill="#555" />
      </Icon>
    </button>
    <button aria-label="语音" className="flex-1 flex items-center justify-center">
      <Icon w={24} h={32}>
        <rect x="6" y="0" width="12" height="19" rx="6" fill="#555" />
        <path d="M1.500 14Q2 23 12 23Q22 23 22.500 14M12 23V28" stroke="#555" strokeWidth="3" />
        <path d="M4 28H20V32H4Z" fill="#555" />
      </Icon>
    </button>
    <button aria-label="手机输入" className="flex-1 flex items-center justify-center">
      <Icon w={26} h={32}>
        <rect width="26" height="32" rx="3" fill="#a5a5a5" />
        <path d="M3 3H23V26H3Z" fill="#f2f1f2" />
        <rect x="10" y="6" width="6" height="11" rx="3" fill="#a5a5a5" />
        <path d="M7 14Q7 20 13 20Q19 20 19 14M13 20V24" stroke="#a5a5a5" strokeWidth="1.500" />
        <circle cx="13" cy="29" r="1" fill="#faf6eb" />
      </Icon>
    </button>
    <button aria-label="设置" className="flex-1 flex items-center justify-center">
      <Icon w={32} h={32}>
        <path d="M16 1V31M3 8.500L29 23.500M29 8.500L3 23.500" stroke="#555" strokeWidth="7" />
        <circle cx="16" cy="16" r="8.500" fill="#f2f1f2" stroke="#555" strokeWidth="5" />
      </Icon>
    </button>
  </div>
);

const Slide = () => (
  <div className="w-[1276px] h-[307px] bg-[#faf6eb] border border-[#b9bcbc] shrink-0">
    <div className="h-full rounded-lg bg-[#4dc4c9] flex items-center pl-8 gap-5 text-[#faf6eb] whitespace-nowrap">
      <Emblem className="w-[154px] h-[154px]" />
      <div className="pb-2">
        <h1 className="flex items-baseline pl-1 text-[72px] leading-[88px] font-bold">
          川越
          <span className="font-[Inter] font-medium text-[84px]">PPT</span>
          <span className="font-[Inter] font-medium text-[84px]">,</span>
          <span className="ml-5">每周日分享</span>
          <span className="font-[Inter] font-medium text-[84px]">PPT</span>
          干货
        </h1>
        <p className="text-[34px] leading-[50px] font-light font-['Noto_Sans_CJK_SC',sans-serif]">
          更多模板，请关注微信公众号号：
          <span className="underline decoration-wavy decoration-1 decoration-[#e0453f] underline-offset-2">pptkecheng</span>
          ，点击页面菜单栏即可
        </p>
      </div>
    </div>
  </div>
);

const App: React.FC = () => (
  <div className={`h-screen overflow-hidden flex flex-col bg-[#faf6eb] pl-[29px] ${FONT}`}>
    <div className="flex-1 min-h-0 flex flex-col border-t-4 border-b-2 border-[#7a9a50]">
      <div className="flex-1 min-h-0 mr-1 flex flex-col border-t border-r border-b border-black bg-[#e6e6e5]">
        <TitleTabs />
        <Ribbon />
        <QuickAccess />

        <div className="flex-1 min-h-0 flex">
          <aside className="w-[364px] shrink-0 border-r border-[#b9bac0] pt-[33px] pl-4 mt-1">
            <ul>
              <Thumbnail index={1} active animated />
              <Thumbnail index={2} />
              <Thumbnail index={3} animated />
            </ul>
          </aside>

          <main className="flex-1 min-w-0 flex flex-col">
            <div className="relative flex-1 min-h-0 overflow-hidden pt-[6px] pl-[7px]">
              <div className="pl-[261px]">
                <HorizontalRuler />
              </div>
              <div className="flex pt-[287px] gap-[229px]">
                <VerticalRuler />
                <Slide />
              </div>
              <Guide className="left-[295px]" />
              <Guide className="left-[904px]" />
              <Guide className="left-[1265px]" />
              <Guide className="left-[1536px]" />
              <div className="absolute left-[45px] right-0 top-[476px] h-px bg-[repeating-linear-gradient(90deg,#a3a3a3_0_3px,transparent_3px_6px)]" />
              <InputMethodBar />
            </div>
            <textarea
              aria-label="备注"
              placeholder="点击此处添加备注"
              className="ml-0.5 h-[53px] shrink-0 resize-none overflow-hidden border-t border-[#b9bac0] bg-transparent pl-[30px] pt-3 text-[44px] leading-[56px] placeholder:text-[#555] outline-none"
            />
          </main>
        </div>
      </div>
    </div>
  </div>
);

export default App;
